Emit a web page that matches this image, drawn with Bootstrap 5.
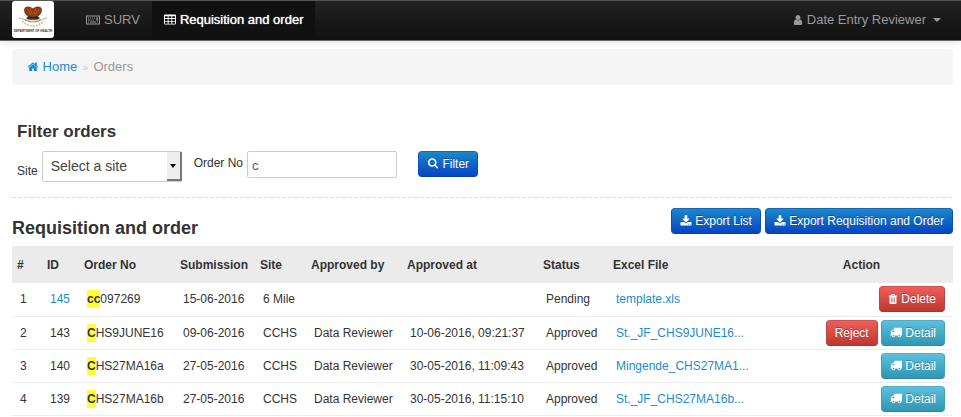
<!DOCTYPE html>
<html lang="en">
<head>
<meta charset="utf-8">
<meta name="viewport" content="width=device-width, initial-scale=1">
<title>Requisition and order</title>
<link href="https://cdn.jsdelivr.net/npm/bootstrap@5.3.0/dist/css/bootstrap.min.css" rel="stylesheet">
<style>
body { font-family: "Liberation Sans", Arial, sans-serif; font-size: 12px; line-height: 20px; color: #333; overflow-x: hidden; }
a { color: #1b8bd0; text-decoration: none; }
.ico { width: 12px; height: 11px; fill: currentColor; vertical-align: -1px; flex: none; }
.ico-sm { width: 10px; height: 10px; }
.ico-wide { width: 14px; height: 10px; }
.topbar { height: 41px; font-size: 13px; background: linear-gradient(#222, #111); border-top: 1px solid #555; border-bottom: 1px solid #666; box-shadow: 0 1px 8px rgba(0,0,0,.12); }
.topbar .nav-link { color: #999; gap: 4px; padding: 0 12px 2px; }
.topbar .nav-link.active { color: #fff; background: #111; text-shadow: 0 0 1px #fff; }
.topbar .account { border-left: 1px solid #111; padding: 0 20px 2px; }
.topbar .dropdown-toggle::after { margin-left: 3px; border-width: 4px 4px 0; }
.logo { width: 42px; height: 37px; }
.page { padding: 8px 8px 0 12px; }
.crumbs { background: #f5f5f5; padding: 8px 15px; font-size: 13px; border-radius: 4px; --bs-breadcrumb-divider: "»"; --bs-breadcrumb-item-padding-x: 5px; --bs-breadcrumb-divider-color: #ccc; --bs-breadcrumb-item-active-color: #999; }
.crumbs .breadcrumb-item::before { font-size: 11px; }
.filters { padding: 37px 5px 15px; }
.filter-title { font-size: 17px; font-weight: 700; line-height: 20px; }
.filter-row { margin-top: 9px; }
.order-group { margin-left: 12px; }
.order-group label { padding-top: 2px; }
.filter-btn { margin-left: 21px; }
.site-box { width: 140px; height: 31px; }
.site-box .form-select { height: 31px; padding: 0 24px 0 8px; font-size: 14px; color: #444; background-image: none; border: 1px solid #ccc; border-radius: 2px; }
.drop-face { right: 0; top: 1px; width: 15px; height: 29px; background: #eee; border-right: 2px solid #777; border-bottom: 2px solid #777; pointer-events: none; }
.drop-face::after { content: ""; border: 3px solid transparent; border-top: 4px solid #000; border-bottom: 0; }
.order-box { width: 150px; height: 27px; padding: 2px 4px 0; font-size: 13px; color: #555; border: 1px solid #ccc; border-radius: 2px; }
.btn { --bs-btn-font-size: 12px; --bs-btn-line-height: 20px; --bs-btn-padding-x: 8px; --bs-btn-padding-y: 2px; --bs-btn-border-radius: 4px; text-shadow: 0 -1px 0 rgba(0,0,0,.25); white-space: nowrap; }
.btn-blue { color: #fff; background: linear-gradient(#1b87c9, #0744c4); border-color: #1267bd #0b4fb8 #0a3fa6; }
.btn-red { color: #fff; background: linear-gradient(#ee5f5b, #bd362f); border-color: #d2504c #c0403a #a8322c; }
.btn-teal { color: #fff; background: linear-gradient(#5bc0de, #2f96b4); border-color: #50aeca #3c9fbc #2c88a3; }
.divider { height: 1px; background: repeating-linear-gradient(90deg, #ddd 0 4px, transparent 4px 6px); }
.list-head { padding: 10px 0 6px; }
.list-title { font-size: 18px; font-weight: 700; line-height: 24px; padding-top: 8px; }
.orders { table-layout: fixed; --bs-table-color: #333; }
.orders > thead th { height: 37px; padding: 0 5px; background: #ebebeb; border: 0; vertical-align: middle; white-space: nowrap; }
.orders > tbody td { height: 33px; padding: 3px 8px; border-bottom: 1px solid #eee; white-space: nowrap; }
.orders .hit { background: #ff3; font-weight: 700; padding: 2px 0; }
.c-num { width: 30px; } .c-id { width: 37px; } .c-order { width: 96px; } .c-date { width: 80px; } .c-site { width: 51px; }
.c-by { width: 96px; } .c-at { width: 136px; } .c-status { width: 70px; } .c-action { width: 183px; }
</style>
<script src="https://cdn.jsdelivr.net/npm/bootstrap@5.3.0/dist/js/bootstrap.bundle.min.js"></script>
</head>
<body>
<svg class="d-none" aria-hidden="true">
  <symbol id="home" viewBox="0 100 1792 1500"><path d="M1472 992v480q0 26-19 45t-45 19h-384v-384h-256v384h-384q-26 0-45-19t-19-45v-480q0-1 .5-3t.5-3l575-474 575 474q1 2 1 6zm223-69l-62 74q-8 9-21 11h-3q-13 0-21-7l-692-577-692 577q-12 8-24 7-13-2-21-11l-62-74q-8-10-7-23.500t11-21.500l719-599q32-26 76-26t76 26l244 204v-195q0-14 9-23t23-9h192q14 0 23 9t9 23v408l219 182q10 8 11 21.500t-7 23.500z"/></symbol>
  <symbol id="search" viewBox="0 100 1792 1792"><path d="M1216 832q0-185-131.500-316.500t-316.500-131.500-316.500 131.500-131.500 316.500 131.500 316.500 316.500 131.500 316.500-131.500 131.500-316.500zm512 832q0 52-38 90t-90 38q-54 0-90-38l-343-342q-179 124-399 124-143 0-273.500-55.500t-225-150-150-225-55.500-273.500 55.500-273.500 150-225 225-150 273.500-55.500 273.500 55.500 225 150 150 225 55.500 273.500q0 220-124 399l343 343q37 37 37 90z"/></symbol>
  <symbol id="download" viewBox="0 0 1792 1600"><path fill-rule="evenodd" d="M1344 1344q0-26-19-45t-45-19-45 19-19 45 19 45 45 19 45-19 19-45zm256 0q0-26-19-45t-45-19-45 19-19 45 19 45 45 19 45-19 19-45zm128-224v320q0 40-28 68t-68 28h-1472q-40 0-68-28t-28-68v-320q0-40 28-68t68-28h465l135 136q58 56 136 56t136-56l136-136h464q40 0 68 28t28 68zm-325-569q17 41-14 70l-448 448q-18 19-45 19t-45-19l-448-448q-31-29-14-70 17-39 59-39h256v-448q0-26 19-45t45-19h256q26 0 45 19t19 45v448h256q42 0 59 39z"/></symbol>
  <symbol id="user" viewBox="200 128 1392 1536"><path d="M1536 1399q0 109-62.500 187t-150.500 78h-854q-88 0-150.500-78t-62.500-187q0-85 8.500-160.500t31.500-152 58.500-131 94-89 134.500-34.500q131 128 313 128t313-128q76 0 134.500 34.500t94 89 58.500 131 31.500 152 8.500 160.500zm-256-887q0 159-112.500 271.500t-271.500 112.500-271.500-112.500-112.500-271.500 112.500-271.500 271.500-112.500 271.500 112.500 112.500 271.500z"/></symbol>
  <symbol id="truck" viewBox="0 200 1792 1500"><path d="M640 1408q0-52-38-90t-90-38-90 38-38 90 38 90 90 38 90-38 38-90zm-384-512h384v-256h-158q-13 0-22 9l-195 195q-9 9-9 22v30zm1280 512q0-52-38-90t-90-38-90 38-38 90 38 90 90 38 90-38 38-90zm256-1088v1024q0 15-4 26.500t-13.500 18.500-16.500 11.500-23.500 6-22.500 2-25.500 0-22.500-.5q0 106-75 181t-181 75-181-75-75-181h-384q0 106-75 181t-181 75-181-75-75-181h-64q-3 0-22.500.5t-25.500 0-22.500-2-23.500-6-16.500-11.500-13.500-18.500-4-26.500q0-26 19-45t45-19v-320q0-8-.5-35t0-38 2.500-34.500 6.500-37 14-30.500 22.500-30l198-198q19-19 50.500-32t58.500-13h160v-192q0-26 19-45t45-19h1024q26 0 45 19t19 45z"/></symbol>
  <symbol id="trash" viewBox="0 0 12 12"><path fill-rule="evenodd" d="M4.300 0h3.400l.8 1.700H11v1.200h-.8V10.500Q10.200 12 9 12H3Q1.800 12 1.800 10.500V2.900H1V1.700h2.500zM5 .9l-.4.8h2.800L7 .9zM3.800 4.300v5.800h.8V4.300zm1.800 0v5.800h.8V4.300zm1.800 0v5.800h.8V4.300z"/></symbol>
  <symbol id="grid" viewBox="0 0 13 11"><path fill-rule="evenodd" d="M1.200 0h10.600Q13 0 13 1.200v8.600q0 1.200-1.200 1.200H1.200Q0 11 0 9.800V1.200Q0 0 1.200 0zM1 2v2h3V2zm4 0v2h3V2zm4 0v2h3V2zM1 5v2h3V5zm4 0v2h3V5zm4 0v2h3V5zM1 8v2h3V8zm4 0v2h3V8zm4 0v2h3V8z"/></symbol>
  <symbol id="keyboard" viewBox="0 0 14 10"><path fill-rule="evenodd" d="M0 .5h14v9H0zM1 1.500v7h12v-7z"/><path d="M2 2.500h1v1H2zm2 0h1v1H4zm2 0h1v1H6zm2 0h1v1H8zm2 0h2v3h-2v-1h1v-1h-1zM2 4.500h2v1H2zm3 0h1v1H5zm2 0h1v1H7zM2 6.500h1v1H2zm2 0h6v1H4zm7 0h1v1h-1z"/></symbol>
</svg>

<nav class="topbar d-flex align-items-stretch ps-2" aria-label="Main">
  <a class="ms-1 me-3" href="#" aria-label="Department of Health">
    <svg class="logo d-block" viewBox="0 0 42 37">
      <rect width="42" height="37" rx="3" fill="#fff"/>
      <path d="M21 19Q12 14 12 9.500 12 5.500 16 5.500q3 0 5 2 2-2 5-2 4 0 4 4 0 4.500-9 9.500z" fill="#8d3b16"/>
      <path d="M15 8l4 6M27 8l-4 6M18 7l2 6M24 7l-2 6" stroke="#c0622a" stroke-width=".7" fill="none"/>
      <path d="M14 17l3-2 4 1 4-1 3 2-3 2h-8z" fill="#332a20"/>
      <path d="M7 17l8 2h12l8-2" stroke="#b9b2a4" fill="none"/>
      <path d="M10 20q5 5 11 5t11-5" stroke="#e2cb90" stroke-width="2" stroke-dasharray="2 1" fill="none"/>
      <path d="M13 19q8 4 16 0" stroke="#9a9182" fill="none"/>
      <text x="21" y="31" text-anchor="middle" font-family="Liberation Sans, sans-serif" font-size="3" font-weight="700" fill="#333">DEPARTMENT OF HEALTH</text>
    </svg>
  </a>
  <a class="nav-link d-flex align-items-center ms-1" href="#"><svg class="ico ico-wide"><use href="#keyboard"/></svg>SURV</a>
  <a class="nav-link active d-flex align-items-center" aria-current="page" href="#"><svg class="ico"><use href="#grid"/></svg>Requisition and order</a>
  <button type="button" class="nav-link account dropdown-toggle d-flex align-items-center ms-auto bg-transparent border-0" data-bs-toggle="dropdown"><svg class="ico ico-sm"><use href="#user"/></svg>Date Entry Reviewer</button>
</nav>

<main class="page">
  <nav aria-label="Breadcrumb">
    <ol class="breadcrumb crumbs mb-0">
      <li class="breadcrumb-item"><a href="#"><svg class="ico"><use href="#home"/></svg> Home</a></li>
      <li class="breadcrumb-item active" aria-current="page">Orders</li>
    </ol>
  </nav>

  <form class="filters">
    <h2 class="filter-title mb-0">Filter orders</h2>
    <div class="filter-row d-flex align-items-start">
      <div class="d-flex align-items-center">
        <label class="pt-2" for="site">Site</label>
        <div class="site-box position-relative ms-1">
          <select class="form-select" id="site"><option>Select a site</option></select>
          <span class="drop-face position-absolute d-flex align-items-center justify-content-center"></span>
        </div>
      </div>
      <div class="order-group d-flex">
        <label for="order">Order No</label>
        <input class="order-box ms-1" id="order" type="text" value="c">
      </div>
      <button type="submit" class="btn btn-blue filter-btn"><svg class="ico"><use href="#search"/></svg> Filter</button>
    </div>
  </form>
  <div class="divider"></div>

  <div class="list-head d-flex justify-content-between">
    <h2 class="list-title mb-0">Requisition and order</h2>
    <div class="d-flex gap-1 align-self-start">
      <button type="button" class="btn btn-blue"><svg class="ico"><use href="#download"/></svg> Export List</button>
      <button type="button" class="btn btn-blue"><svg class="ico"><use href="#download"/></svg> Export Requisition and Order</button>
    </div>
  </div>

  <table class="table orders align-middle mb-0">
    <colgroup><col class="c-num"><col class="c-id"><col class="c-order"><col class="c-date"><col class="c-site"><col class="c-by"><col class="c-at"><col class="c-status"><col><col class="c-action"></colgroup>
    <thead><tr><th>#</th><th>ID</th><th>Order No</th><th>Submission</th><th>Site</th><th>Approved by</th><th>Approved at</th><th>Status</th><th>Excel File</th><th class="text-center">Action</th></tr></thead>
    <tbody>
      <tr><td>1</td><td><a href="#">145</a></td><td><span class="hit">cc</span>097269</td><td>15-06-2016</td><td>6 Mile</td><td></td><td></td><td>Pending</td><td><a href="#">template.xls</a></td><td class="text-end"><button type="button" class="btn btn-red"><svg class="ico ico-sm"><use href="#trash"/></svg> Delete</button></td></tr>
      <tr><td>2</td><td>143</td><td><span class="hit">C</span>HS9JUNE16</td><td>09-06-2016</td><td>CCHS</td><td>Data Reviewer</td><td>10-06-2016, 09:21:37</td><td>Approved</td><td><a href="#">St._JF_CHS9JUNE16...</a></td><td class="text-end"><button type="button" class="btn btn-red">Reject</button> <button type="button" class="btn btn-teal"><svg class="ico"><use href="#truck"/></svg> Detail</button></td></tr>
      <tr><td>3</td><td>140</td><td><span class="hit">C</span>HS27MA16a</td><td>27-05-2016</td><td>CCHS</td><td>Data Reviewer</td><td>30-05-2016, 11:09:43</td><td>Approved</td><td><a href="#">Mingende_CHS27MA1...</a></td><td class="text-end"><button type="button" class="btn btn-teal"><svg class="ico"><use href="#truck"/></svg> Detail</button></td></tr>
      <tr><td>4</td><td>139</td><td><span class="hit">C</span>HS27MA16b</td><td>27-05-2016</td><td>CCHS</td><td>Data Reviewer</td><td>30-05-2016, 11:15:10</td><td>Approved</td><td><a href="#">St._JF_CHS27MA16b...</a></td><td class="text-end"><button type="button" class="btn btn-teal"><svg class="ico"><use href="#truck"/></svg> Detail</button></td></tr>
    </tbody>
  </table>
</main>
</body>
</html>
